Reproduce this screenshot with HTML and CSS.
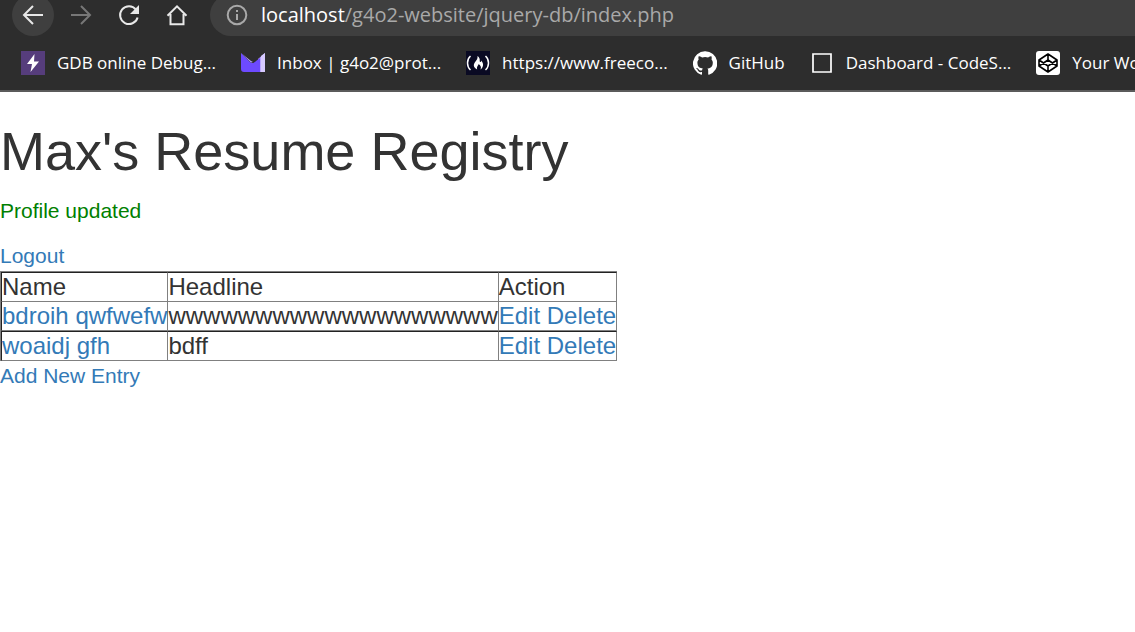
FILE: index.html
```html
<!DOCTYPE html>
<html lang="en">
<head>
<meta charset="utf-8">
<title>Max's Resume Registry</title>
<link rel="stylesheet" href="styles.css">
</head>
<body>
<header class="browser">
  <div class="toolbar">
    <button class="nav-button nav-button-active" aria-label="Back"><svg width="24" height="24" viewBox="0 0 24 24"><path d="M22 12H3M12 3l-9 9 9 9"/></svg></button>
    <button class="nav-button nav-button-dim" aria-label="Forward"><svg width="24" height="24" viewBox="0 0 24 24"><path d="M2 12h19M12 3l9 9-9 9"/></svg></button>
    <button class="nav-button" aria-label="Reload"><svg width="24" height="24" viewBox="0 0 24 24"><path d="M20.600 14.500A8.900 8.900 0 1 1 19 6.600l1.500 2"/><path class="solid" d="M22 2v9h-9z"/></svg></button>
    <button class="nav-button" aria-label="Home"><svg width="24" height="24" viewBox="0 0 24 24"><path d="M2.500 12.800L12 3.400l9.500 9.400M5.500 11v10.300h13V11"/></svg></button>
    <div class="address">
      <svg width="22" height="22" viewBox="0 0 22 22"><circle cx="11" cy="11" r="9.300"/><path d="M11 10v6M11 6v2"/></svg>
      <span class="url"><span class="host">localhost</span>/g4o2-website/jquery-db/index.php</span>
    </div>
  </div>
  <nav class="bookmarks" aria-label="Bookmarks">
    <a class="bookmark" href="#"><svg width="24" height="24" viewBox="0 0 24 24"><path fill="#563d7c" d="M0 0h24v24H0z"/><path fill="#fff" d="M13.500 3L6 13h5l-1.500 8L18 10.500h-5z"/></svg><span class="label">GDB online Debug...</span></a>
    <a class="bookmark" href="#"><svg width="24" height="24" viewBox="0 0 24 24"><path fill="#baa6ff" d="M24 2v19h-7V8z"/><path fill="#d7caff" d="M20 5l4-3v19h-4z"/><path fill="#6d4aff" d="M0 2l9 9c2 2 4 1 6-1l4-3v14H3c-2 0-3-1-3-3z"/><path fill="#baa6ff" d="M0 2l10 8 2 1-2 .5z"/></svg><span class="label">Inbox | g4o2@prot...</span></a>
    <a class="bookmark" href="#"><svg width="24" height="24" viewBox="0 0 24 24"><path fill="#0a0a23" d="M0 0h24v24H0z"/><path fill="none" stroke="#fff" stroke-width="1.500" d="M4.500 5C.5 8.500.5 15.500 4.500 19M19.500 5c4 3.500 4 10.500 0 14"/><path fill="#fff" d="M11.500 5c4 3 1 5.500 3 6 1 0 .7-1 .5-1.500 2.500 2 3.200 6.500-.5 9 1-2.500.3-4-1.800-5.500-.2 1.500-2.400 2.500-1.500 5.500C6.500 16 7.500 13 9.500 10.500c1.300-1.500 2.300-3 2-5.500z"/></svg><span class="label">https://www.freeco...</span></a>
    <a class="bookmark" href="#"><svg width="24" height="24" viewBox="0 0 24 24"><path fill="#fff" d="M12 .3a12 12 0 0 0-3.800 23.400c.6.1.8-.3.800-.6v-2c-3.300.7-4-1.600-4-1.600-.6-1.400-1.400-1.800-1.400-1.800-1-.7.100-.7.100-.7 1.200.1 1.900 1.200 1.900 1.200 1 1.800 2.800 1.300 3.500 1 .1-.8.400-1.300.8-1.600-2.700-.3-5.500-1.300-5.500-6 0-1.200.5-2.300 1.300-3.100-.2-.4-.6-1.600 0-3.200 0 0 1-.3 3.400 1.200a11.500 11.500 0 0 1 6 0c2.300-1.500 3.300-1.200 3.300-1.200.6 1.600.2 2.800.1 3.200.8.800 1.300 1.900 1.300 3.200 0 4.600-2.800 5.600-5.500 5.900.5.400.9 1 .9 2.200v3.300c0 .3.100.7.800.6A12 12 0 0 0 12 .3"/></svg><span class="label">GitHub</span></a>
    <a class="bookmark" href="#"><svg width="24" height="24" viewBox="0 0 24 24"><path fill="none" stroke="#fff" stroke-width="1.700" d="M3 3h18v18H3z"/></svg><span class="label">Dashboard - CodeS...</span></a>
    <a class="bookmark" href="#"><svg width="24" height="24" viewBox="0 0 24 24"><rect width="24" height="24" rx="3" fill="#fff"/><path fill="none" stroke="#000" stroke-width="1.600" stroke-linejoin="round" d="M12 3l9 6v6l-9 6-9-6V9zM3 9l9 6 9-6M3 15l9-6 9 6M12 3v6M12 15v6"/></svg><span class="label">Your Work</span></a>
  </nav>
</header>
<main class="page">
  <h1 class="title">Max's Resume Registry</h1>
  <p class="flash">Profile updated</p>
  <a href="#">Logout</a>
  <table class="registry">
    <thead>
      <tr><th>Name</th><th>Headline</th><th>Action</th></tr>
    </thead>
    <tbody>
      <tr><td><a href="#">bdroih qwfwefw</a></td><td>wwwwwwwwwwwwwwwwwww</td><td><a href="#">Edit</a> <a href="#">Delete</a></td></tr>
      <tr class="divided"><td><a href="#">woaidj gfh</a></td><td>bdff</td><td><a href="#">Edit</a> <a href="#">Delete</a></td></tr>
    </tbody>
  </table>
  <a href="#">Add New Entry</a>
</main>
</body>
</html>
```
FILE: styles.css
```css
* { box-sizing: border-box; }

body {
  margin: 0;
  background: #fff;
  color: #333;
  font: 21px/30px "Liberation Sans", Arial, sans-serif;
}

a { color: #337ab7; text-decoration: none; }

.browser {
  overflow: hidden;
  background: #2d2d2d;
  border-bottom: 2px solid #5b5b5b;
  font-family: "Open Sans", "Noto Sans", sans-serif;
}

.toolbar {
  display: flex;
  align-items: flex-end;
  gap: 6px;
  height: 36px;
  padding-left: 12px;
}

.nav-button {
  display: flex;
  flex: none;
  align-items: center;
  justify-content: center;
  width: 42px;
  height: 42px;
  padding: 0;
  border: 0;
  border-radius: 50%;
  background: none;
  color: #e8e8e8;
}

.nav-button-active { background: #3f3f3f; }
.nav-button-dim { color: #777; }

.nav-button svg,
.address svg {
  flex: none;
  fill: none;
  stroke: currentColor;
  stroke-width: 2;
}

.nav-button .solid { fill: currentColor; stroke: none; }

.address {
  display: flex;
  flex: 1;
  align-items: center;
  gap: 13px;
  height: 42px;
  margin-left: 6px;
  padding-left: 16px;
  border-radius: 21px 0 0 21px;
  background: #3f3f3f;
  color: #a9a9a9;
}

.url { font-size: 20px; white-space: nowrap; }
.host { color: #fff; }

.bookmarks {
  display: flex;
  align-items: center;
  gap: 25px;
  height: 54px;
  padding-left: 21px;
}

.bookmark {
  display: flex;
  flex: none;
  align-items: center;
  gap: 12px;
  color: #fff;
  font-size: 17px;
  white-space: nowrap;
}

.page { padding-top: 30px; }

.title {
  margin: 0 0 15px;
  font-size: 54px;
  font-weight: 400;
  line-height: 59px;
}

.flash { margin: 0 0 15px; color: green; }

.registry {
  border-left: 1px solid #808080;
  border-top: 1px solid #808080;
  border-spacing: 0;
  font-size: 24px;
  line-height: 28px;
}

.registry th,
.registry td {
  padding: 0;
  border-right: 1px solid #808080;
  border-bottom: 1px solid #808080;
  font-weight: 400;
  text-align: left;
}

.registry th { border-top: 1px solid #222; }
.registry .divided td { border-top: 1px solid #222; }

.registry th:first-child,
.registry td:first-child { border-left: 1px solid #222; }
```
